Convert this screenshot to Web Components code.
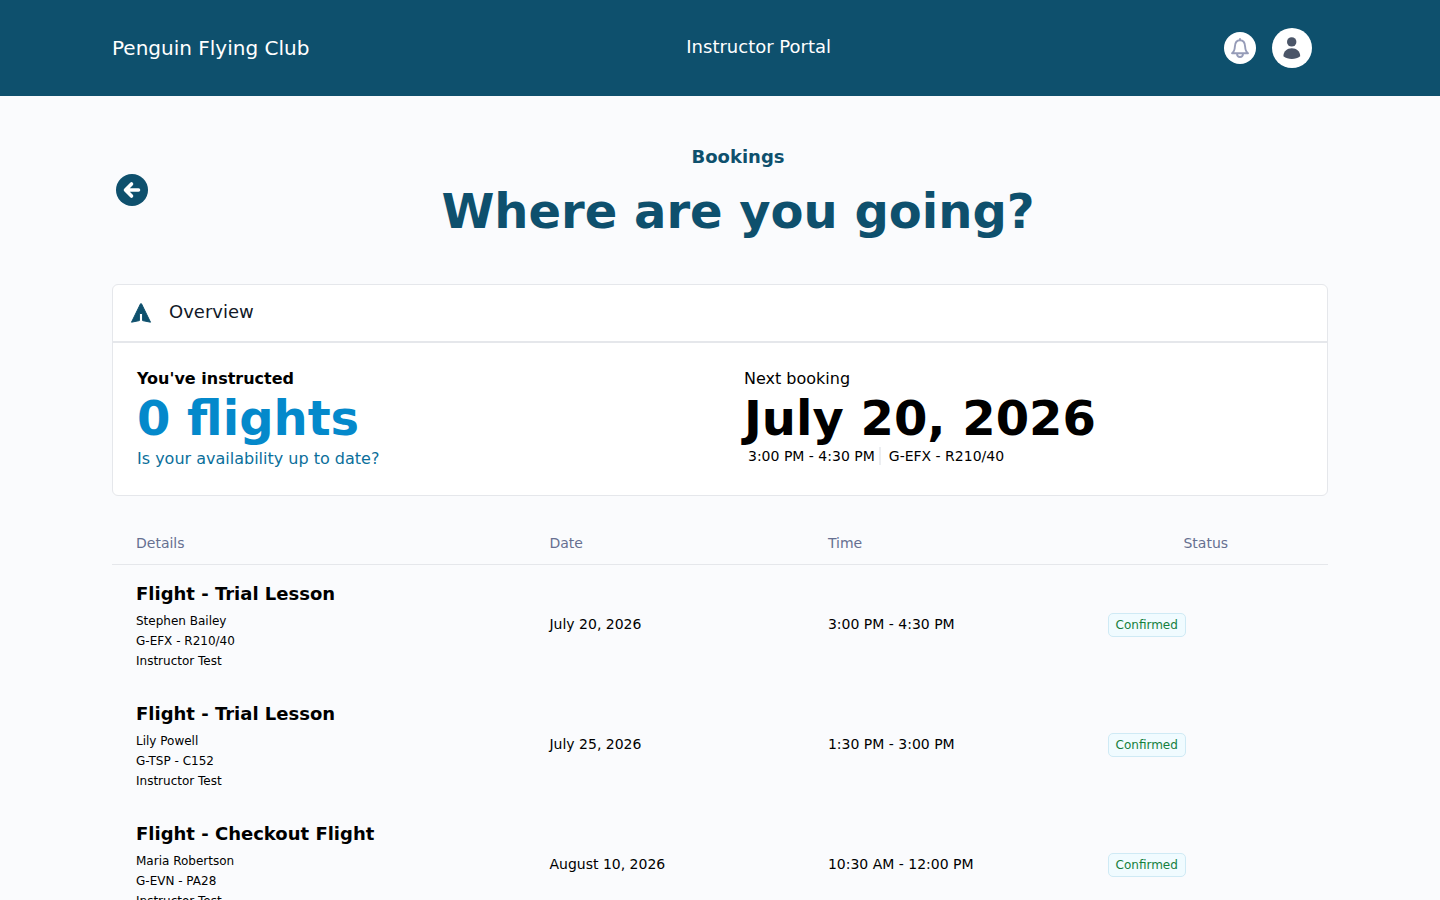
<!DOCTYPE html>
<html lang="en">
<head>
<meta charset="utf-8">
<meta name="viewport" content="width=device-width, initial-scale=1">
<title>Penguin Flying Club</title>
<style>
  html { scrollbar-width: none; }
  body { margin: 0; background: #fafbfd; color: #000; font: 16px/24px "DejaVu Sans", sans-serif; }
  main { max-width: 1216px; margin: 0 auto; padding: 48px 32px; }
</style>
</head>
<body>
<app-header>
  <span slot="brand">Penguin Flying Club</span>
  <span slot="title">Instructor Portal</span>
  <round-button slot="actions" label="Notifications" style="--size: 32px">
    <svg width="24" height="24" viewBox="0 0 24 24" fill="none" stroke="#969cb8" stroke-width="1.900" stroke-linecap="round" stroke-linejoin="round" aria-hidden="true"><path d="M12 3V4M4 17.200H20C18 15.800 17.300 13.800 17.100 10.500C16.900 6.500 15 4.200 12 4.200S7.100 6.500 6.900 10.500C6.700 13.800 6 15.800 4 17.200ZM9 17.500C9 19.700 10.300 21 12 21S15 19.700 15 17.500"/></svg>
  </round-button>
  <round-button slot="actions" label="Account" style="--size: 40px">
    <svg width="24" height="24" viewBox="0 0 24 24" fill="#4b5568" aria-hidden="true"><circle cx="11.700" cy="5.900" r="4.700"/><path d="M3.400 20.200C3.400 15.500 7 12.300 11.800 12.300S20.200 15.500 20.200 20.200C17.800 22.100 15 22.900 11.800 22.900S5.800 22.100 3.400 20.200Z"/></svg>
  </round-button>
</app-header>
<main>
  <page-heading>
    <span slot="eyebrow">Bookings</span>
    Where are you going?
  </page-heading>
  <overview-card>
    <span slot="title">Overview</span>
    <stat-block style="--accent: #0489cb">
      <strong slot="label">You've instructed</strong>
      0 flights
      <text-link slot="note" href="#availability">Is your availability up to date?</text-link>
    </stat-block>
    <stat-block>
      <span slot="label">Next booking</span>
      July 20, 2026
      <booking-meta slot="note"><span slot="time">3:00 PM - 4:30 PM</span><span slot="aircraft">G-EFX - R210/40</span></booking-meta>
    </stat-block>
  </overview-card>
  <bookings-table></bookings-table>
</main>
<script>
function define(name, html, setup) {
  const template = document.createElement("template");
  template.innerHTML = html;
  customElements.define(name, class extends HTMLElement {
    constructor() {
      super();
      this.attachShadow({ mode: "open" }).append(template.content.cloneNode(true));
    }
    connectedCallback() {
      if (setup) setup(this, this.shadowRoot);
    }
  });
}

define("app-header", `
  <style>
    :host { display: block; background: #0e506d; color: #fff; }
    header { display: flex; align-items: center; justify-content: space-between; max-width: 1216px; height: 96px; margin: 0 auto; padding: 0 32px; }
    .brand { font-size: 20px; line-height: 28px; }
    .title { font-size: 18px; line-height: 28px; padding-bottom: 2px; }
    .actions { display: flex; align-items: center; gap: 16px; padding: 0 16px; }
  </style>
  <header>
    <div class="brand"><slot name="brand"></slot></div>
    <div class="title"><slot name="title"></slot></div>
    <div class="actions"><slot name="actions"></slot></div>
  </header>`);

define("round-button", `
  <style>
    :host { display: block; }
    button { display: flex; align-items: center; justify-content: center; width: var(--size); height: var(--size); padding: 0; border: 0; border-radius: 50%; background: #fff; cursor: pointer; }
  </style>
  <button type="button"><slot></slot></button>`, (host, root) => {
    root.querySelector("button").setAttribute("aria-label", host.getAttribute("label"));
  });

define("page-heading", `
  <style>
    :host { display: flex; align-items: center; padding-left: 4px; color: #0e506d; }
    button { width: 32px; height: 32px; padding: 0; border: 0; background: none; cursor: pointer; }
    svg { display: block; }
    .text { flex: 1; text-align: center; }
    p { margin: 0; font-size: 18px; line-height: 26px; font-weight: 600; }
    h1 { margin: 16px 0 0; font-size: 48px; line-height: 50px; font-weight: 800; }
  </style>
  <button type="button" aria-label="Back">
    <svg width="32" height="32" viewBox="0 0 32 32" aria-hidden="true"><circle cx="16" cy="16" r="16" fill="#0e506d"/><path d="M22.500 16H10M15.500 10L9.500 16L15.500 22" fill="none" stroke="#fff" stroke-width="3.600" stroke-linecap="round" stroke-linejoin="round"/></svg>
  </button>
  <div class="text">
    <p><slot name="eyebrow"></slot></p>
    <h1><slot></slot></h1>
  </div>`);

define("overview-card", `
  <style>
    :host { display: block; margin-top: 48px; border: 1px solid #e5e7eb; border-radius: 6px; background: #fff; }
    header { display: flex; align-items: center; gap: 16px; padding: 16px; height: 24px; border-bottom: 2px solid #e5e7eb; }
    h2 { margin: 0; font-size: 18px; line-height: 24px; font-weight: 400; color: #111827; padding-bottom: 2px; }
    .stats { display: grid; grid-template-columns: 1fr 1fr; padding: 24px 0; }
  </style>
  <header>
    <svg width="24" height="24" viewBox="0 0 24 24" fill="#0e506d" stroke="#0e506d" stroke-width="1" stroke-linejoin="round" aria-hidden="true"><path d="M11.500 2.800H12.500L21.500 21.200L13.600 19.600V12.500H10.400V19.600L2.500 21.200Z"/></svg>
    <h2><slot name="title"></slot></h2>
  </header>
  <div class="stats"><slot></slot></div>`);

define("stat-block", `
  <style>
    :host { display: block; padding: 0 24px; }
    .label { line-height: 24px; }
    .value { margin: 0; padding-bottom: 2px; font-size: 48px; line-height: 54px; font-weight: 800; color: var(--accent, #000); }
    .note { line-height: 24px; }
  </style>
  <div class="label"><slot name="label"></slot></div>
  <p class="value"><slot></slot></p>
  <div class="note"><slot name="note"></slot></div>`);

define("text-link", `
  <style>
    :host { display: inline; }
    a { color: #0b6f9b; text-decoration: none; }
  </style>
  <a><slot></slot></a>`, (host, root) => {
    root.querySelector("a").href = host.getAttribute("href");
  });

define("booking-meta", `
  <style>
    :host { display: flex; padding-left: 4px; font-size: 14px; line-height: 18px; }
    .time { padding-right: 4px; border-right: 2px solid #eceef1; }
    .aircraft { padding-left: 8px; }
  </style>
  <span class="time"><slot name="time"></slot></span>
  <span class="aircraft"><slot name="aircraft"></slot></span>`);

define("status-badge", `
  <style>
    :host { display: inline-block; padding: 3px 7px; border: 1px solid #cfeaf5; border-radius: 5px; background: #f0fbff; color: #15803d; font-size: 12px; line-height: 16px; }
  </style>
  <slot></slot>`);

const bookings = [
  ["Flight - Trial Lesson", "Stephen Bailey", "G-EFX - R210/40", "July 20, 2026", "3:00 PM - 4:30 PM"],
  ["Flight - Trial Lesson", "Lily Powell", "G-TSP - C152", "July 25, 2026", "1:30 PM - 3:00 PM"],
  ["Flight - Checkout Flight", "Maria Robertson", "G-EVN - PA28", "August 10, 2026", "10:30 AM - 12:00 PM"]
];

define("bookings-table", `
  <style>
    :host { display: block; margin-top: 24px; }
    table { width: 100%; table-layout: fixed; border-collapse: separate; border-spacing: 0; font-size: 14px; line-height: 20px; }
    th, td { box-sizing: border-box; }
    th { height: 45px; padding: 12px 24px 10px; border-bottom: 1px solid #e5e7eb; font-weight: 400; text-align: left; color: #667091; }
    th:last-child { text-align: center; }
    th:nth-child(1) { width: 34%; }
    th:nth-child(2) { width: 22.9%; }
    th:nth-child(3) { width: 23%; }
    td { height: 120px; padding: 12px 24px; vertical-align: middle; }
    .when { padding-bottom: 14px; }
    h3 { margin: 0 0 3px; font-size: 18px; line-height: 28px; font-weight: 600; }
    p { margin: 0; font-size: 12px; line-height: 20px; }
  </style>
  <table>
    <thead><tr><th scope="col">Details</th><th scope="col">Date</th><th scope="col">Time</th><th scope="col">Status</th></tr></thead>
    <tbody></tbody>
  </table>`, (host, root) => {
    root.querySelector("tbody").innerHTML = bookings.map(([title, pilot, aircraft, date, time]) => `
      <tr>
        <td><h3>${title}</h3><p>${pilot}</p><p>${aircraft}</p><p>Instructor Test</p></td>
        <td class="when">${date}</td>
        <td class="when">${time}</td>
        <td><status-badge>Confirmed</status-badge></td>
      </tr>`).join("");
  });
</script>
</body>
</html>
